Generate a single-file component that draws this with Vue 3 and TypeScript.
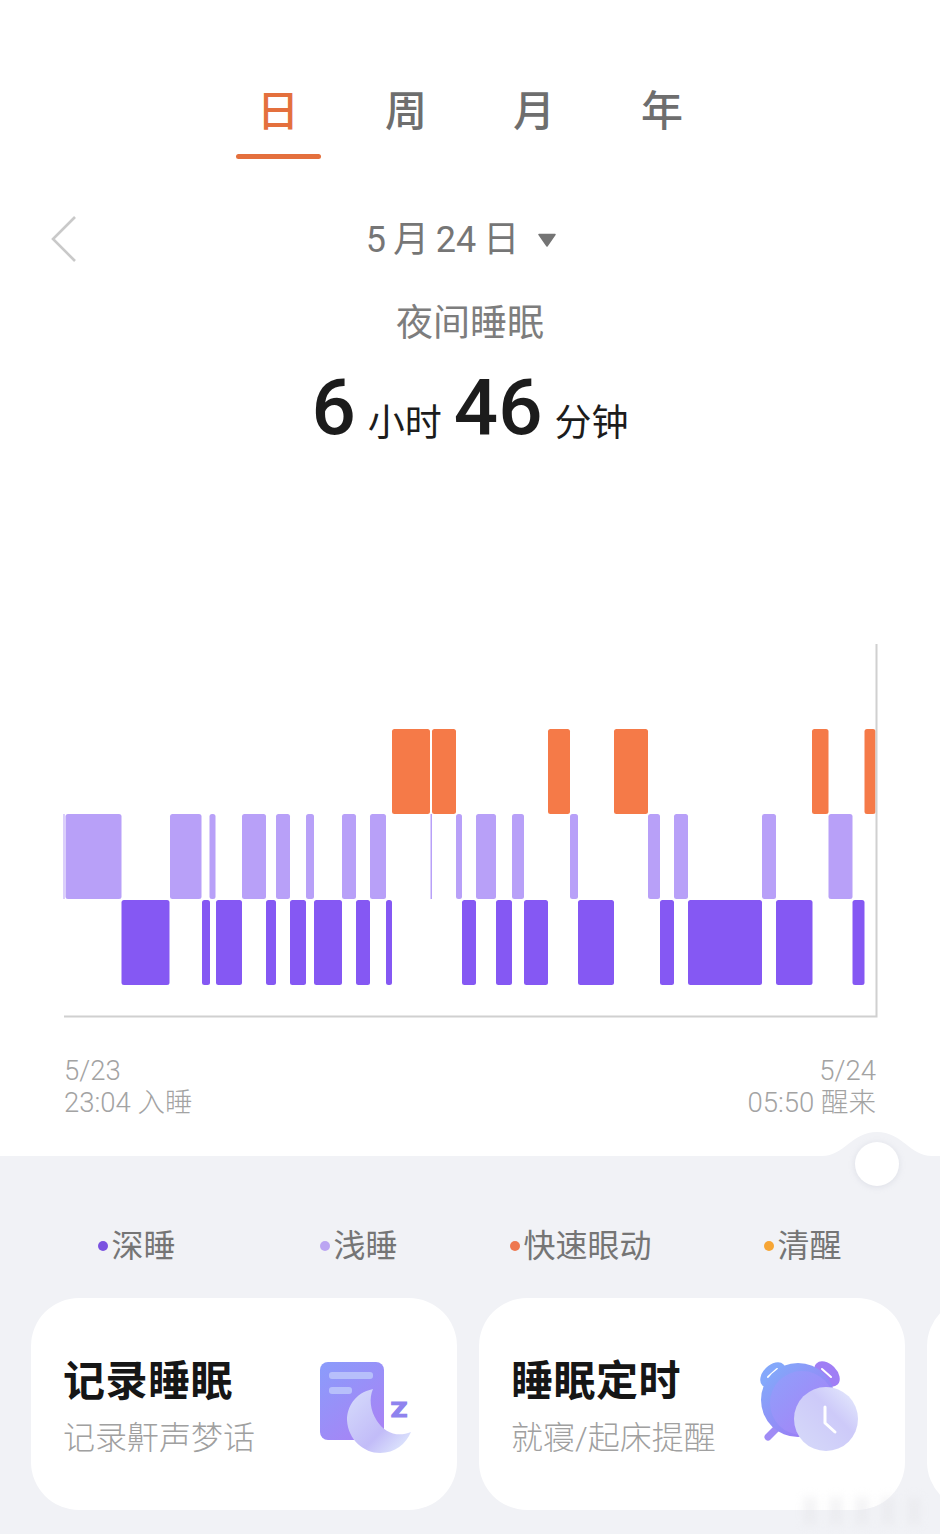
<template>
  <div class="page">
    <nav class="tabs">
      <div v-for="(tab, index) in tabs" :key="tab" :class="['tab', { active: index === 0 }]">
        <span class="tab-label">{{ tab }}</span>
        <i class="tab-line"></i>
      </div>
    </nav>

    <header class="date-row">
      <svg class="back" width="26" height="48" viewBox="0 0 26 48">
        <path d="M24 2 L2 24 L24 46" fill="none" stroke="#c9c9c9" stroke-width="2.6" />
      </svg>
      <span class="date">5 月 24 日</span>
      <svg class="caret" width="20" height="14" viewBox="0 0 20 14">
        <path d="M2 1.5 H18 L10 13 Z" fill="#747474" stroke="#747474" stroke-width="1.5" stroke-linejoin="round" />
      </svg>
    </header>

    <p class="night">夜间睡眠</p>
    <div class="duration">
      <b>6</b><span>小时</span><b>46</b><span>分钟</span>
    </div>

    <svg class="chart" width="940" height="380" viewBox="0 640 940 380">
      <rect
        v-for="(seg, index) in segments"
        :key="index"
        :x="seg.from"
        :y="rows[seg.stage].y"
        :width="seg.to - seg.from"
        :height="rows[seg.stage].h"
        :fill="rows[seg.stage].color"
        :rx="seg.to - seg.from > 3 ? 2.5 : 0"
      />
      <path d="M64 1016.5 H876.5 V644" fill="none" stroke="#d0d0d0" stroke-width="2" />
    </svg>

    <div class="times">
      <div>
        <div>5/23</div>
        <div>23:04 入睡</div>
      </div>
      <div class="right">
        <div>5/24</div>
        <div>05:50 醒来</div>
      </div>
    </div>

    <section class="panel">
      <svg class="bump" width="110" height="64" viewBox="0 0 110 64">
        <path d="M0 24 C22 24 30 0 55 0 C80 0 88 24 110 24 V64 H0 Z" fill="#f1f2f6" />
      </svg>
      <i class="knob"></i>

      <div class="legend">
        <div v-for="item in legend" :key="item.label" class="legend-item">
          <i class="dot" :style="{ background: item.color }"></i>{{ item.label }}
        </div>
      </div>

      <div class="cards">
        <article class="card">
          <div class="card-text">
            <h3>记录睡眠</h3>
            <p>记录鼾声梦话</p>
          </div>
          <svg class="card-icon moon-icon" width="110" height="110" viewBox="310 1350 110 110">
            <defs>
              <linearGradient id="docFill" x1="0" y1="0" x2="0.7" y2="1">
                <stop offset="0" stop-color="#8a9cfb" />
                <stop offset="1" stop-color="#a784f5" />
              </linearGradient>
              <linearGradient id="moonFill" x1="0" y1="0" x2="1" y2="1">
                <stop offset="0" stop-color="#d6dcfb" />
                <stop offset="0.6" stop-color="#c2bcf8" />
                <stop offset="1" stop-color="#e6f2fe" />
              </linearGradient>
            </defs>
            <rect x="320" y="1362" width="64" height="78" rx="8" fill="url(#docFill)" />
            <rect x="329" y="1372" width="44" height="7" rx="3" fill="#b7bffb" />
            <rect x="329" y="1387" width="23" height="7" rx="3" fill="#b7bffb" />
            <path d="M373 1389 C354 1393 347 1408 347 1420 C348 1440 364 1453 380 1453 C395 1453 406 1444 411 1432 C397 1438 384 1432 377 1421 C370 1410 369 1398 373 1389 Z" fill="url(#moonFill)" />
            <text x="399" y="1417" text-anchor="middle" class="snooze" fill="#8f83ee" stroke="#8f83ee" stroke-width="1.2" transform="translate(399 0) scale(1.25 1) translate(-399 0)">Z</text>
          </svg>
        </article>

        <article class="card">
          <div class="card-text">
            <h3>睡眠定时</h3>
            <p>就寝/起床提醒</p>
          </div>
          <svg class="card-icon clock-icon" width="110" height="110" viewBox="755 1350 110 110">
            <defs>
              <linearGradient id="ringFill" x1="0" y1="0" x2="1" y2="1">
                <stop offset="0" stop-color="#7fb0fb" />
                <stop offset="1" stop-color="#a26ff3" />
              </linearGradient>
              <linearGradient id="faceFill" x1="0" y1="0" x2="1" y2="1">
                <stop offset="0" stop-color="#8fa0fb" />
                <stop offset="1" stop-color="#a97ff6" />
              </linearGradient>
              <linearGradient id="glassFill" x1="0" y1="1" x2="1" y2="0">
                <stop offset="0" stop-color="#d6daf9" />
                <stop offset="0.6" stop-color="#cdcaf9" />
                <stop offset="1" stop-color="#e8eefd" />
              </linearGradient>
            </defs>
            <path d="M768 1437 L778 1427" stroke="#a08cf5" stroke-width="7" stroke-linecap="round" />
            <ellipse cx="773" cy="1375" rx="15" ry="10" transform="rotate(-45 773 1375)" fill="#84a8fb" />
            <ellipse cx="827" cy="1374" rx="15" ry="10" transform="rotate(45 827 1374)" fill="#a07ef5" />
            <path d="M768 1377 L777 1369 M822 1369 L831 1377" stroke="#ffffff" stroke-width="2" stroke-linecap="round" />
            <circle cx="798" cy="1400" r="37" fill="url(#ringFill)" />
            <circle cx="802" cy="1403" r="32" fill="url(#faceFill)" />
            <circle cx="826" cy="1419" r="32" fill="url(#glassFill)" />
            <path d="M825 1407 V1423 L835 1432" fill="none" stroke="#ffffff" stroke-width="3" stroke-linecap="round" stroke-linejoin="round" />
          </svg>
        </article>

        <article class="card"></article>
      </div>

      <i class="smudge"></i>
    </section>
  </div>
</template>

<script setup lang="ts">
type Stage = 'rem' | 'light' | 'deep';

interface Segment {
  stage: Stage;
  from: number;
  to: number;
}

const tabs = ['日', '周', '月', '年'];

const rows: Record<Stage, { y: number; h: number; color: string }> = {
  rem: { y: 729, h: 85, color: '#f57a48' },
  light: { y: 814, h: 85, color: '#b8a0f8' },
  deep: { y: 900, h: 85, color: '#8558f3' }
};

const spans: Record<Stage, [number, number][]> = {
  rem: [[392, 430], [432, 456], [548, 570], [614, 648], [812, 828.5], [864.5, 875.5]],
  light: [
    [63.5, 64.5], [65.5, 121.5], [170, 201.5], [209.5, 215.5], [242, 266], [276, 290],
    [306, 314], [342, 356], [370, 386], [430.5, 432], [456, 462], [476, 496], [512, 524],
    [570, 578], [648, 660], [674, 688], [762, 776], [828.5, 852.5]
  ],
  deep: [
    [121.5, 169.5], [202, 210], [216, 242], [266, 276], [290, 306], [314, 342], [356, 370],
    [386, 392], [462, 476], [496, 512], [524, 548], [578, 614], [660, 674], [688, 762],
    [776, 812.5], [852.5, 864.5]
  ]
};

const segments: Segment[] = (Object.keys(spans) as Stage[]).flatMap((stage) =>
  spans[stage].map(([from, to]) => ({ stage, from, to }))
);

const legend = [
  { label: '深睡', color: '#7a52e0' },
  { label: '浅睡', color: '#bba5f2' },
  { label: '快速眼动', color: '#ee7850' },
  { label: '清醒', color: '#f6a535' }
];
</script>

<style>
html,
body {
  margin: 0;
  background: #fff;
}
</style>

<style scoped>
.page {
  width: 940px;
  height: 1534px;
  overflow: hidden;
  background: #fff;
  display: flex;
  flex-direction: column;
  font-family: Roboto, "Noto Sans CJK SC", sans-serif;
}

.tabs {
  display: flex;
  justify-content: center;
  padding-top: 88px;
}

.tab {
  width: 128px;
  display: flex;
  flex-direction: column;
  align-items: center;
  color: #6e6e6e;
}

.tab-label {
  font-size: 42px;
  line-height: 48px;
  font-weight: 500;
}

.tab-line {
  width: 85px;
  height: 5px;
  margin-top: 18px;
  border-radius: 3px;
}

.tab.active {
  color: #e4703d;
}

.tab.active .tab-line {
  background: #e4703d;
}

.date-row {
  position: relative;
  display: flex;
  justify-content: center;
  align-items: center;
  gap: 18px;
  height: 46px;
  margin-top: 58px;
  padding-right: 17px;
  color: #767676;
}

.back {
  position: absolute;
  left: 51px;
  top: -2px;
}

.date {
  font-size: 36px;
  line-height: 46px;
  word-spacing: -2px;
}

.night {
  margin: 38px 0 0;
  text-align: center;
  font-size: 37px;
  line-height: 46px;
  color: #7d7d7d;
}

.duration {
  display: flex;
  justify-content: center;
  align-items: baseline;
  gap: 12px;
  height: 96px;
  margin-top: 13px;
  color: #1c1c1c;
}

.duration b {
  font-size: 78px;
  line-height: 96px;
  font-weight: 500;
}

.duration span {
  font-size: 37px;
  line-height: 40px;
  transform: translateY(2px);
}

.chart {
  display: block;
  margin-top: 184px;
  flex: none;
}

.times {
  display: flex;
  justify-content: space-between;
  margin-top: 35px;
  padding: 0 64px;
  font-size: 27.5px;
  line-height: 32px;
  font-weight: 300;
  color: #a3a3a3;
}

.right {
  text-align: right;
}

.panel {
  position: relative;
  flex: 1;
  margin-top: 37px;
  background: #f1f2f6;
}

.bump {
  position: absolute;
  right: 8px;
  top: -24px;
}

.knob {
  position: absolute;
  left: 855px;
  top: -14px;
  width: 44px;
  height: 44px;
  border-radius: 50%;
  background: #fff;
  box-shadow: 0 1px 6px rgba(170, 172, 190, 0.28);
}

.legend {
  display: grid;
  grid-template-columns: repeat(4, 222px);
  padding: 72px 0 0 26px;
}

.legend-item {
  display: flex;
  justify-content: center;
  align-items: center;
  gap: 3px;
  font-size: 32px;
  line-height: 36px;
  color: #757575;
}

.dot {
  width: 10px;
  height: 10px;
  border-radius: 50%;
}

.cards {
  display: flex;
  gap: 22px;
  margin-top: 34px;
  padding-left: 31px;
}

.card {
  flex: none;
  box-sizing: border-box;
  width: 426px;
  height: 212px;
  padding: 0 37px 0 32px;
  display: flex;
  justify-content: space-between;
  align-items: center;
  background: #fff;
  border-radius: 48px;
}

.card-text {
  padding-top: 6px;
}

.card-text h3 {
  margin: 0;
  font-size: 42px;
  line-height: 52px;
  font-weight: 700;
  letter-spacing: 0.5px;
  color: #161616;
}

.card-text p {
  margin: 10px 0 0;
  font-size: 32px;
  line-height: 40px;
  font-weight: 300;
  color: #a0a0a0;
  white-space: nowrap;
}

.card-icon {
  flex: none;
  margin-top: 2px;
}

.clock-icon {
  margin-right: 3px;
}

.snooze {
  font-family: Roboto, sans-serif;
  font-size: 21px;
  font-weight: 900;
}

.smudge {
  position: absolute;
  left: 804px;
  bottom: 9px;
  width: 128px;
  height: 28px;
  background: repeating-linear-gradient(90deg, #e4e4e8 0 12px, transparent 12px 26px);
  filter: blur(5px);
  opacity: 0.45;
}
</style>
